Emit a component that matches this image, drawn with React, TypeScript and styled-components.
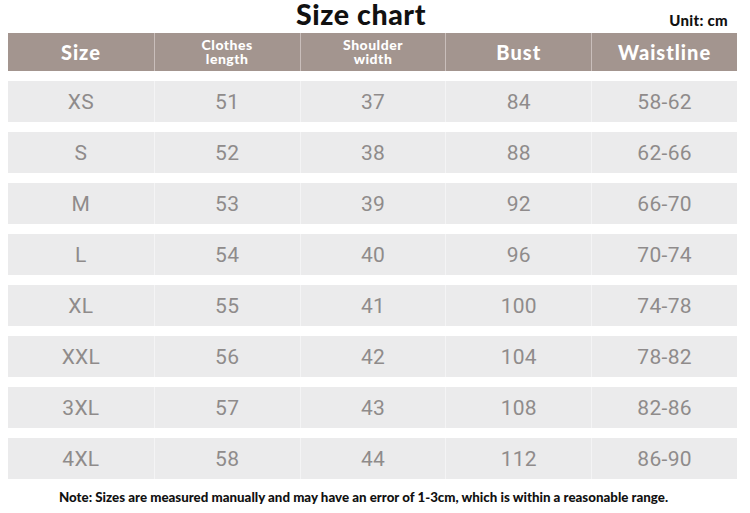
import React from "react";
import styled, { createGlobalStyle } from "styled-components";

const Global = createGlobalStyle`
  html, body { margin: 0; padding: 0; background: #ffffff; }
  body { width: 750px; height: 513px; overflow: hidden; }
`;

const Page = styled.div`
  width: 750px;
  height: 513px;
  box-sizing: border-box;
  padding: 0 13px 0 8px;
  display: flex;
  flex-direction: column;
  font-family: "Lato", "Noto Sans", sans-serif;
`;

const TitleBar = styled.div`
  position: relative;
  height: 33px;
  display: flex;
  justify-content: center;
  align-items: flex-start;
`;

const Title = styled.h1`
  margin: 0 23px 0 0;
  font-family: "Lato", sans-serif;
  font-weight: 900;
  font-size: 28.5px;
  line-height: 29px;
  color: #111;
  letter-spacing: 0.6px;
`;

const Unit = styled.span`
  position: absolute;
  right: 9px;
  top: 11px;
  font-family: "Lato", sans-serif;
  font-weight: 900;
  font-size: 15px;
  line-height: 18px;
  color: #111;
  letter-spacing: 0.3px;
`;

const Table = styled.div`
  display: flex;
  flex-direction: column;
  gap: 10px;
`;

const Row = styled.div<{ $head?: boolean }>`
  display: grid;
  grid-template-columns: repeat(5, 1fr);
  height: ${(p) => (p.$head ? "38px" : "41px")};
  background: ${(p) => (p.$head ? "#a3958f" : "#ebebec")};
`;

const Cell = styled.div<{ $head?: boolean; $first?: boolean }>`
  display: flex;
  align-items: center;
  justify-content: center;
  text-align: center;
  border-left: ${(p) =>
    p.$first ? "none" : p.$head ? "1px solid #c9bebb" : "1px solid #f4f4f5"};
  color: ${(p) => (p.$head ? "#ffffff" : "#8f8b8b")};
  font-family: ${(p) => (p.$head ? `"Lato", sans-serif` : `"Roboto", sans-serif`)};
  font-weight: ${(p) => (p.$head ? 900 : 400)};
  font-size: ${(p) => (p.$head ? "20px" : "21px")};
  letter-spacing: ${(p) => (p.$head ? "1px" : "0.3px")};
`;

const SmallHead = styled.span`
  display: block;
  font-size: 14px;
  line-height: 14px;
  font-weight: 900;
  letter-spacing: 0.5px;
`;

const Note = styled.p`
  margin: 10px 0 0 0;
  padding: 0 18px 0 0;
  text-align: center;
  font-family: "Lato", sans-serif;
  font-weight: 900;
  font-size: 13.3px;
  line-height: 16px;
  color: #111;
`;

const rows = [
  ["XS", "51", "37", "84", "58-62"],
  ["S", "52", "38", "88", "62-66"],
  ["M", "53", "39", "92", "66-70"],
  ["L", "54", "40", "96", "70-74"],
  ["XL", "55", "41", "100", "74-78"],
  ["XXL", "56", "42", "104", "78-82"],
  ["3XL", "57", "43", "108", "82-86"],
  ["4XL", "58", "44", "112", "86-90"],
];

export default function App() {
  return (
    <>
      <Global />
      <Page>
        <TitleBar>
          <Title>Size chart</Title>
          <Unit>Unit: cm</Unit>
        </TitleBar>
        <Table>
          <Row $head>
            <Cell $head $first>Size</Cell>
            <Cell $head>
              <div>
                <SmallHead>Clothes</SmallHead>
                <SmallHead>length</SmallHead>
              </div>
            </Cell>
            <Cell $head>
              <div>
                <SmallHead>Shoulder</SmallHead>
                <SmallHead>width</SmallHead>
              </div>
            </Cell>
            <Cell $head>Bust</Cell>
            <Cell $head>Waistline</Cell>
          </Row>
          {rows.map((r) => (
            <Row key={r[0]}>
              {r.map((v, i) => (
                <Cell key={i} $first={i === 0}>
                  {v}
                </Cell>
              ))}
            </Row>
          ))}
        </Table>
        <Note>
          Note: Sizes are measured manually and may have an error of 1-3cm, which is within a reasonable range.
        </Note>
      </Page>
    </>
  );
}
